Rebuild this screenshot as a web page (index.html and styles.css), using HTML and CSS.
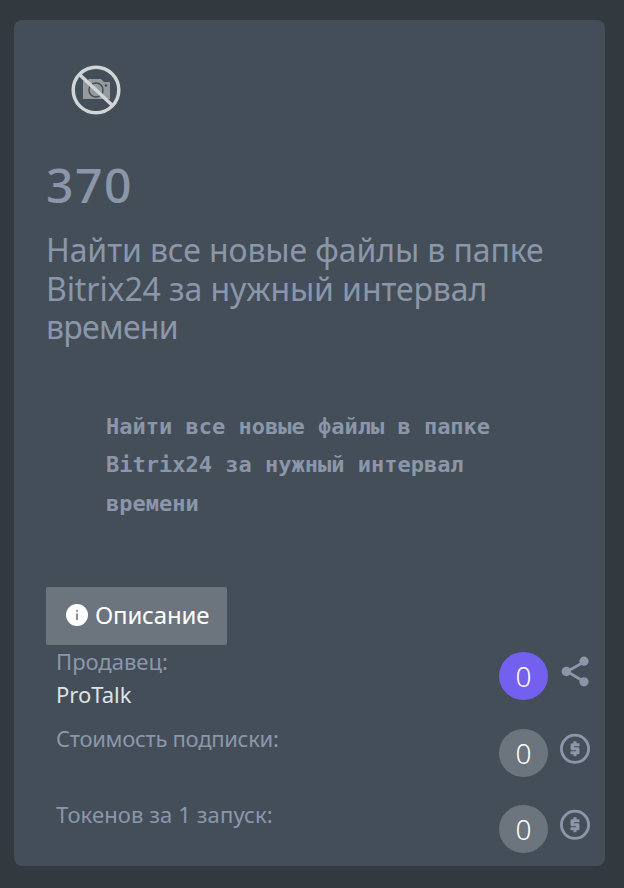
FILE: index.html
```html
<!DOCTYPE html>
<html lang="ru">
<head>
    <meta charset="UTF-8">
    <title>ProTalk</title>
    <link rel="stylesheet" href="styles.css">
</head>
<body>
<div class="card">
    <svg class="no-photo" width="50" height="50" viewBox="0 0 50 50">
        <path class="camera" d="M12 16h4l2-2h12l3 3h6v17H12z"/>
        <circle class="lens" cx="25" cy="25" r="7"/>
        <circle class="dot" cx="35" cy="20.500" r="1.200"/>
        <path class="slash" d="M9 10l32 30"/>
        <circle class="ring" cx="25" cy="25" r="22.800"/>
    </svg>
    <h1 class="number">370</h1>
    <h2 class="title">Найти все новые файлы в папке<br>Bitrix24 за нужный интервал<br><span class="last">времени</span></h2>
    <pre class="text">Найти все новые файлы в папке
Bitrix24 за нужный интервал
времени</pre>
    <button class="btn">
        <svg width="22" height="22" viewBox="0 0 22 22">
            <circle cx="11" cy="11" r="11" fill="#fff"/>
            <path d="M10.200 9.500h1.600v6.500h-1.600zM10.200 6h1.600v1.800h-1.600z" fill="#6c757d"/>
        </svg>
        <span>Описание</span>
    </button>
    <ul class="info">
        <li>
            <div class="label">
                <p class="seller">Продавец:</p>
                <p class="name">ProTalk</p>
            </div>
            <span class="badge active">0</span>
            <svg class="icon" width="32" height="32" viewBox="0 0 32 32">
                <path class="line" d="M25 6L8 15.500l17 10"/>
                <circle class="fill" cx="7.300" cy="15.500" r="4.700"/>
                <circle class="fill" cx="25" cy="5.200" r="4.600"/>
                <circle class="fill" cx="25" cy="25.800" r="4.600"/>
            </svg>
        </li>
        <li>
            <div class="label"><p class="price">Стоимость подписки:</p></div>
            <span class="badge">0</span>
            <svg class="icon" width="32" height="32" viewBox="0 0 32 32">
                <circle class="line" cx="16" cy="15.800" r="13.600"/>
                <path class="fill" d="M14.500 8.300h3v2h3v3h-5.500v1h4q1.500 0 1.500 1.500v4q0 1.500-1.500 1.500h-1.500v2h-3v-2h-3v-3h5.500v-1h-4q-1.500 0-1.500-1.500v-4q0-1.500 1.500-1.500h1.500z"/>
            </svg>
        </li>
        <li>
            <div class="label"><p class="tokens">Токенов за 1 запуск:</p></div>
            <span class="badge">0</span>
            <svg class="icon" width="32" height="32" viewBox="0 0 32 32">
                <circle class="line" cx="16" cy="15.800" r="13.600"/>
                <path class="fill" d="M14.500 8.300h3v2h3v3h-5.500v1h4q1.500 0 1.500 1.500v4q0 1.500-1.500 1.500h-1.500v2h-3v-2h-3v-3h5.500v-1h-4q-1.500 0-1.500-1.500v-4q0-1.500 1.500-1.500h1.500z"/>
            </svg>
        </li>
    </ul>
</div>
</body>
</html>
```
FILE: styles.css
```css
*{
    margin: 0;
    padding: 0;
    box-sizing: border-box;
}
body{
    background-color: #32393f;
    color: #8c96a9;
    font-family: "Noto Sans", sans-serif;
}
.card{
    width: 591px;
    height: 846px;
    margin: 20px 0 0 14px;
    padding: 45px 14px 0 32px;
    border-radius: 8px;
    background-color: #434e59;
}
.no-photo{
    display: block;
    margin-left: 25px;
}
.camera{
    fill: #969a9d;
}
.lens{
    fill: #969a9d;
    stroke: #434e59;
    stroke-width: 1.5;
}
.dot{
    fill: #434e59;
}
.slash, .ring{
    fill: none;
    stroke: #d2d5d6;
    stroke-width: 3.5;
}
.number{
    margin-top: 40px;
    height: 60px;
    line-height: 60px;
    font-size: 48px;
    font-weight: 500;
    letter-spacing: 1.6px;
}
.title{
    margin-top: 16px;
    line-height: 38.5px;
    font-size: 32px;
    font-weight: 400;
    letter-spacing: -0.1px;
    white-space: nowrap;
}
.title .last{
    letter-spacing: -0.7px;
}
.text{
    margin: 61px 0 0 60px;
    line-height: 38.5px;
    font-family: "DejaVu Sans Mono", monospace;
    font-size: 22px;
    font-weight: bold;
}
.btn{
    display: flex;
    align-items: center;
    gap: 7px;
    width: 181px;
    height: 58px;
    margin-top: 64px;
    padding: 0 0 3px 20px;
    border: none;
    border-radius: 2px;
    background-color: #6c757d;
    color: #fff;
    font-family: "Noto Sans", sans-serif;
    font-size: 24px;
    letter-spacing: -0.2px;
}
.info{
    list-style: none;
    padding-left: 10px;
}
.info li{
    display: flex;
    height: 76.5px;
    padding-top: 7px;
}
.label{
    flex: 1;
    font-size: 22px;
    line-height: 33px;
    margin-top: -7px;
    white-space: nowrap;
}
.price{
    letter-spacing: -0.3px;
}
.tokens{
    letter-spacing: 0.1px;
}
.name{
    color: #dee2e6;
}
.badge{
    width: 49px;
    height: 48px;
    margin-right: 11px;
    border-radius: 50%;
    background-color: #6c757d;
    color: #fff;
    font-size: 28px;
    font-weight: 300;
    line-height: 48px;
    text-align: center;
}
.badge.active{
    background-color: #7460ee;
}
.icon{
    margin-top: 4px;
}
.icon .line{
    fill: none;
    stroke: #8c96a9;
    stroke-width: 2.8;
}
.icon .fill{
    fill: #8c96a9;
}
```
